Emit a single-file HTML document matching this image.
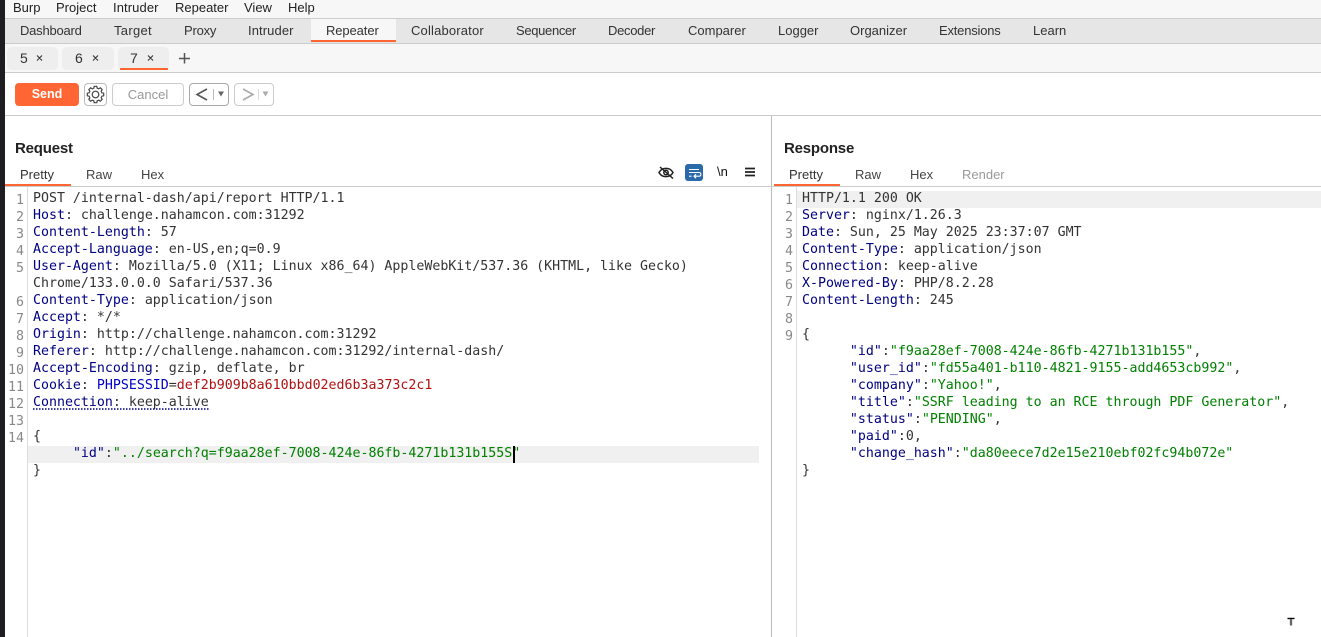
<!DOCTYPE html>
<html><head><meta charset="utf-8"><style>
html,body{margin:0;padding:0}
body{width:1321px;height:637px;position:relative;overflow:hidden;background:#fff;font-family:"Liberation Sans",sans-serif;font-size:13px;color:#333}
.a{position:absolute;white-space:pre}
.r{position:absolute}
.m{position:absolute;white-space:pre;font-family:"DejaVu Sans Mono",monospace;font-size:13.28px;line-height:17px;height:17px;color:#333}
.n{position:absolute;white-space:pre;font-family:"DejaVu Sans Mono",monospace;font-size:13.28px;line-height:17px;color:#888;text-align:right;width:20px}
b{font-weight:normal}.k{color:#000080}.g{color:#008000}.d{color:#b01010}.p{color:#0000c8}
</style></head><body>
<div class="r" style="left:5px;top:0;width:1316px;height:18px;background:#f7f7f7"></div>
<div class="r" style="left:5px;top:18px;width:1316px;height:24px;background:#e6e6e6;border-top:1px solid #ccc;border-bottom:1px solid #ccc"></div>
<div class="r" style="left:311px;top:19px;width:85px;height:23px;background:#f7f7f7"></div>
<div class="r" style="left:311px;top:40px;width:85px;height:2px;background:#ff6633"></div>
<div class="r" style="left:5px;top:44px;width:1316px;height:28px;background:#f7f7f7;border-bottom:1px solid #ccc"></div>
<div class="r" style="left:5px;top:73px;width:1316px;height:42px;background:#fff;border-bottom:1px solid #ccc"></div>
<div class="r" style="left:0;top:0;width:5px;height:637px;background:#1e1e22"></div>
<div class="r" style="left:771px;top:116px;width:1px;height:521px;background:#bbb"></div>

<div class="a" style="left:13px;top:0;font-size:13px;line-height:15px;color:#222">Burp</div>
<div class="a" style="left:56px;top:0;line-height:15px;color:#222">Project</div>
<div class="a" style="left:113px;top:0;line-height:15px;color:#222;letter-spacing:.1px">Intruder</div>
<div class="a" style="left:175px;top:0;line-height:15px;color:#222">Repeater</div>
<div class="a" style="left:244px;top:0;line-height:15px;color:#222">View</div>
<div class="a" style="left:288px;top:0;line-height:15px;color:#222">Help</div>

<div class="a" style="left:20px;top:23px;line-height:15px;letter-spacing:-.22px">Dashboard</div>
<div class="a" style="left:114px;top:23px;line-height:15px;letter-spacing:.3px">Target</div>
<div class="a" style="left:184px;top:23px;line-height:15px;letter-spacing:-.2px">Proxy</div>
<div class="a" style="left:248px;top:23px;line-height:15px;letter-spacing:.1px">Intruder</div>
<div class="a" style="left:326px;top:23px;line-height:15px;letter-spacing:-.1px">Repeater</div>
<div class="a" style="left:411px;top:23px;line-height:15px;letter-spacing:.17px">Collaborator</div>
<div class="a" style="left:516px;top:23px;line-height:15px;letter-spacing:-.33px">Sequencer</div>
<div class="a" style="left:608px;top:23px;line-height:15px;letter-spacing:-.3px">Decoder</div>
<div class="a" style="left:688px;top:23px;line-height:15px">Comparer</div>
<div class="a" style="left:778px;top:23px;line-height:15px">Logger</div>
<div class="a" style="left:850px;top:23px;line-height:15px">Organizer</div>
<div class="a" style="left:939px;top:23px;line-height:15px;letter-spacing:-.2px">Extensions</div>
<div class="a" style="left:1033px;top:23px;line-height:15px">Learn</div>

<div class="r" style="left:7px;top:47px;width:51px;height:23px;background:#eee;border-radius:5px"></div>
<div class="r" style="left:62px;top:47px;width:52px;height:23px;background:#eee;border-radius:5px"></div>
<div class="r" style="left:118px;top:47px;width:51px;height:23px;background:#eee;border-radius:5px"></div>
<div class="r" style="left:120px;top:68px;width:48px;height:2px;background:#ff6633"></div>
<div class="a" style="left:20px;top:50px;line-height:16px;font-size:14px">5</div>
<div class="a" style="left:75px;top:50px;line-height:16px;font-size:14px">6</div>
<div class="a" style="left:130px;top:50px;line-height:16px;font-size:14px">7</div>
<svg class="r" style="left:0;top:44px" width="200" height="28" fill="none" stroke="#333" stroke-width="1.100">
<path d="M37 11.500l5 5M42 11.500l-5 5M93 11.500l5 5M98 11.500l-5 5M148 11.500l5 5M153 11.500l-5 5"/>
<path d="M184.500 9v10.500M179 14.500h11" stroke="#555" stroke-width="1.500"/></svg>

<div class="a" style="left:15px;top:83px;width:64px;height:23px;background:#ff6633;border-radius:4px;color:#fff;text-align:center;line-height:23px;font-weight:bold;font-size:12.500px">Send</div>
<div class="r" style="left:84px;top:83px;width:21px;height:21px;border:1px solid #bbb;border-radius:4px"></div>
<svg class="r" style="left:84px;top:83px" width="23" height="23" fill="none" stroke="#444" stroke-width="1.200" stroke-linejoin="round">
<g transform="translate(11.500 11.500)">
<circle r="3.300"/>
<path id="t" d="M-2.490 -6L-1.680 -6.280L-1.300 -8.200L1.300 -8.200L1.680 -6.280L2.490 -6"/>
<use href="#t" transform="rotate(45)"/><use href="#t" transform="rotate(90)"/><use href="#t" transform="rotate(135)"/><use href="#t" transform="rotate(180)"/><use href="#t" transform="rotate(225)"/><use href="#t" transform="rotate(270)"/><use href="#t" transform="rotate(315)"/>
</g></svg>
<div class="a" style="left:112px;top:83px;width:70px;height:21px;border:1px solid #ccc;border-radius:4px;color:#999;text-align:center;line-height:22px">Cancel</div>
<div class="r" style="left:189px;top:83px;width:38px;height:21px;border:1px solid #aaa;border-radius:4px"></div>
<div class="r" style="left:234px;top:83px;width:38px;height:21px;border:1px solid #ccc;border-radius:4px"></div>
<svg class="r" style="left:185px;top:83px" width="95" height="23" fill="none">
<path d="M22 6l-10 5.500 10 5.500" stroke="#555" stroke-width="1.600"/>
<path d="M28.500 6v11" stroke="#bbb"/>
<path d="M33 8.500h6l-3 5z" fill="#666"/>
<path d="M58 6l10 5.500-10 5.500" stroke="#aaa" stroke-width="1.600"/>
<path d="M73.500 6v11" stroke="#ddd"/>
<path d="M77.500 8.500h6l-3 5z" fill="#aaa"/></svg>

<div class="a" style="left:15px;top:140px;font-size:15px;line-height:18px;font-weight:bold;color:#222;letter-spacing:-.2px">Request</div>
<div class="a" style="left:784px;top:140px;font-size:15px;line-height:18px;font-weight:bold;color:#222;letter-spacing:-.2px">Response</div>
<div class="r" style="left:5px;top:186px;width:766px;height:1px;background:#ccc"></div>
<div class="r" style="left:772px;top:186px;width:549px;height:1px;background:#ccc"></div>
<div class="r" style="left:5px;top:184px;width:66px;height:2px;background:#ff6633"></div>
<div class="r" style="left:774px;top:184px;width:66px;height:2px;background:#ff6633"></div>
<div class="a" style="left:20px;top:167px;line-height:15px">Pretty</div>
<div class="a" style="left:86px;top:167px;line-height:15px;color:#444">Raw</div>
<div class="a" style="left:141px;top:167px;line-height:15px;color:#444">Hex</div>
<div class="a" style="left:789px;top:167px;line-height:15px">Pretty</div>
<div class="a" style="left:855px;top:167px;line-height:15px;color:#444">Raw</div>
<div class="a" style="left:910px;top:167px;line-height:15px;color:#444">Hex</div>
<div class="a" style="left:962px;top:167px;line-height:15px;color:#999">Render</div>

<svg class="r" style="left:655px;top:162px" width="110" height="20" fill="none" stroke="#222" stroke-width="1.500">
<path d="M4 10.500c3-5.500 11-5.500 14 0c-3 5.500-11 5.500-14 0z"/><circle cx="11" cy="10.500" r="2.200"/><path d="M5 5l13 11.500"/>
<rect x="30" y="2" width="18" height="17" rx="3" fill="#2a6aa8" stroke="none"/>
<path d="M34 7.500h10M34 10.500h10c2.500 0 2.500 3.700 0 3.700h-5M41 12.200l-2 2 2 2M34 14.200h2.500" stroke="#fff" stroke-width="1.100"/>
<path d="M90 6.500h10M90 10h10M90 13.500h10" stroke-width="1.700"/></svg>
<div class="a" style="left:717px;top:164px;font-size:13px;line-height:15px;color:#111">\n</div>

<div class="r" style="left:27px;top:187px;width:1px;height:450px;background:#ddd"></div>
<div class="r" style="left:796px;top:187px;width:1px;height:450px;background:#ddd"></div>
<div class="r" style="left:28px;top:446px;width:731px;height:17px;background:#f0f0f0"></div>
<div class="r" style="left:797px;top:191px;width:524px;height:17px;background:#f0f0f0"></div>

<div class="n" style="left:4px;top:192px">1
2
3
4
5

6
7
8
9
10
11
12
13
14</div>

<div class="m" style="left:33px;top:190px">POST /internal-dash/api/report HTTP/1.1</div>
<div class="m" style="left:33px;top:207px"><b class="k">Host</b>: challenge.nahamcon.com:31292</div>
<div class="m" style="left:33px;top:224px"><b class="k">Content-Length</b>: 57</div>
<div class="m" style="left:33px;top:241px"><b class="k">Accept-Language</b>: en-US,en;q=0.9</div>
<div class="m" style="left:33px;top:258px"><b class="k">User-Agent</b>: Mozilla/5.0 (X11; Linux x86_64) AppleWebKit/537.36 (KHTML, like Gecko)</div>
<div class="m" style="left:33px;top:275px">Chrome/133.0.0.0 Safari/537.36</div>
<div class="m" style="left:33px;top:292px"><b class="k">Content-Type</b>: application/json</div>
<div class="m" style="left:33px;top:309px"><b class="k">Accept</b>: */*</div>
<div class="m" style="left:33px;top:326px"><b class="k">Origin</b>: http://challenge.nahamcon.com:31292</div>
<div class="m" style="left:33px;top:343px"><b class="k">Referer</b>: http://challenge.nahamcon.com:31292/internal-dash/</div>
<div class="m" style="left:33px;top:360px"><b class="k">Accept-Encoding</b>: gzip, deflate, br</div>
<div class="m" style="left:33px;top:377px"><b class="k">Cookie</b>: <b class="p">PHPSESSID</b>=<b class="d">def2b909b8a610bbd02ed6b3a373c2c1</b></div>
<div class="m" style="left:33px;top:394px"><b class="k">Connection</b>: keep-alive</div>
<svg class="r" style="left:33px;top:408px" width="178" height="2"><path d="M0 1H177" stroke="#000080" stroke-width="1.500" stroke-dasharray="1.500 1.500"/></svg>
<div class="m" style="left:33px;top:428px">{</div>
<div class="m" style="left:33px;top:445px">     <b class="k">"id"</b>:<b class="g">"../search?q=f9aa28ef-7008-424e-86fb-4271b131b155S"</b></div>
<div class="m" style="left:33px;top:462px">}</div>
<div class="r" style="left:513px;top:446px;width:2px;height:17px;background:#000"></div>

<div class="n" style="left:773px;top:192px">1
2
3
4
5
6
7
8
9</div>
<div class="m" style="left:802px;top:190px">HTTP/1.1 200 OK</div>
<div class="m" style="left:802px;top:207px"><b class="k">Server</b>: nginx/1.26.3</div>
<div class="m" style="left:802px;top:224px"><b class="k">Date</b>: Sun, 25 May 2025 23:37:07 GMT</div>
<div class="m" style="left:802px;top:241px"><b class="k">Content-Type</b>: application/json</div>
<div class="m" style="left:802px;top:258px"><b class="k">Connection</b>: keep-alive</div>
<div class="m" style="left:802px;top:275px"><b class="k">X-Powered-By</b>: PHP/8.2.28</div>
<div class="m" style="left:802px;top:292px"><b class="k">Content-Length</b>: 245</div>
<div class="m" style="left:802px;top:326px">{</div>
<div class="m" style="left:802px;top:343px">      <b class="k">"id"</b>:<b class="g">"f9aa28ef-7008-424e-86fb-4271b131b155"</b>,</div>
<div class="m" style="left:802px;top:360px">      <b class="k">"user_id"</b>:<b class="g">"fd55a401-b110-4821-9155-add4653cb992"</b>,</div>
<div class="m" style="left:802px;top:377px">      <b class="k">"company"</b>:<b class="g">"Yahoo!"</b>,</div>
<div class="m" style="left:802px;top:394px">      <b class="k">"title"</b>:<b class="g">"SSRF leading to an RCE through PDF Generator"</b>,</div>
<div class="m" style="left:802px;top:411px">      <b class="k">"status"</b>:<b class="g">"PENDING"</b>,</div>
<div class="m" style="left:802px;top:428px">      <b class="k">"paid"</b>:0,</div>
<div class="m" style="left:802px;top:445px">      <b class="k">"change_hash"</b>:<b class="g">"da80eece7d2e15e210ebf02fc94b072e"</b></div>
<div class="m" style="left:802px;top:462px">}</div>

<svg class="r" style="left:1285px;top:615px" width="12" height="13" fill="none"><path d="M2.500 3.500h7M6 3.500v7" stroke="#ccc" stroke-width="3"/><path d="M2.500 3.500h7M6 3.500v7" stroke="#000" stroke-width="1"/></svg>
</body></html>
